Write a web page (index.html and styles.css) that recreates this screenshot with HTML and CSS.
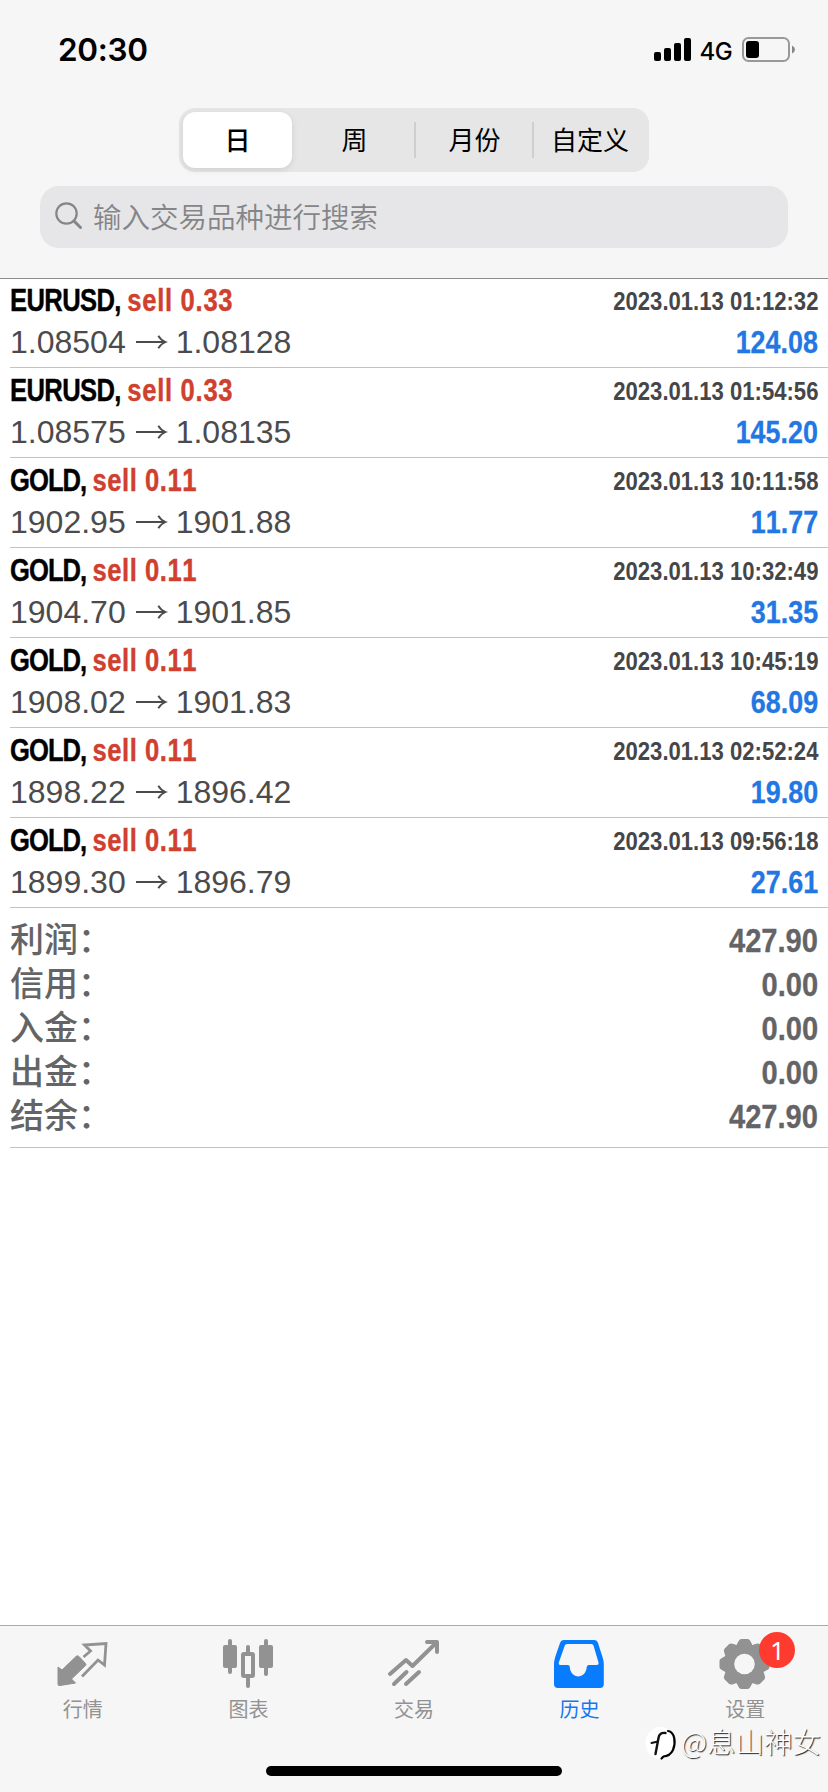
FILE: index.html
```html
<!DOCTYPE html>
<html lang="zh-CN">
<head>
<meta charset="utf-8">
<title>历史</title>
<link rel="stylesheet" href="styles.css">
</head>
<body>
<div class="screen">
  <header class="header">
    <div class="status">
      <span class="time">20:30</span>
      <div class="status-right">
        <svg class="signal" width="38" height="24" viewBox="0 0 38 24"><rect x="0" y="14" width="7" height="9" rx="2"/><rect x="10" y="10" width="7" height="13" rx="2"/><rect x="20" y="5" width="7" height="18" rx="2"/><rect x="30" y="0" width="7" height="23" rx="2"/></svg>
        <span class="network">4G</span>
        <svg class="battery" width="54" height="26" viewBox="0 0 54 26"><rect x="1" y="1" width="46" height="23" rx="5.5" fill="none" stroke="#999" stroke-width="2"/><rect x="4" y="4" width="13" height="17" rx="3"/><path d="M50 8.500Q53 10 53 12.500T50 16.500Z" fill="#888"/></svg>
      </div>
    </div>
    <nav class="segments">
      <span class="segment selected">日</span><span class="segment">周</span><span class="segment ruled">月份</span><span class="segment ruled">自定义</span>
    </nav>
    <div class="search">
      <svg width="28" height="28" viewBox="0 0 28 28" fill="none" stroke="#858587" stroke-linecap="round"><circle cx="11.500" cy="11.500" r="10.200" stroke-width="2.200"/><path d="M19 19L25.500 25.500" stroke-width="3"/></svg>
      <span>输入交易品种进行搜索</span>
    </div>
  </header>

  <main class="content">
    <ul class="deals">
      <li class="deal"><div class="line"><span class="title"><b class="symbol wide">EURUSD, </b><b class="side">sell 0.33</b></span><span class="date">2023.01.13 01:12:32</span></div><div class="line second"><span class="prices">1.08504<svg class="arrow" viewBox="0 0 32 16"><path d="M0 8H30M23 1.500Q25.500 6 30.500 8Q25.500 10 23 14.500"/></svg>1.08128</span><span class="profit">124.08</span></div></li>
      <li class="deal"><div class="line"><span class="title"><b class="symbol wide">EURUSD, </b><b class="side">sell 0.33</b></span><span class="date">2023.01.13 01:54:56</span></div><div class="line second"><span class="prices">1.08575<svg class="arrow" viewBox="0 0 32 16"><path d="M0 8H30M23 1.500Q25.500 6 30.500 8Q25.500 10 23 14.500"/></svg>1.08135</span><span class="profit">145.20</span></div></li>
      <li class="deal"><div class="line"><span class="title"><b class="symbol">GOLD, </b><b class="side">sell 0.11</b></span><span class="date">2023.01.13 10:11:58</span></div><div class="line second"><span class="prices">1902.95<svg class="arrow" viewBox="0 0 32 16"><path d="M0 8H30M23 1.500Q25.500 6 30.500 8Q25.500 10 23 14.500"/></svg>1901.88</span><span class="profit">11.77</span></div></li>
      <li class="deal"><div class="line"><span class="title"><b class="symbol">GOLD, </b><b class="side">sell 0.11</b></span><span class="date">2023.01.13 10:32:49</span></div><div class="line second"><span class="prices">1904.70<svg class="arrow" viewBox="0 0 32 16"><path d="M0 8H30M23 1.500Q25.500 6 30.500 8Q25.500 10 23 14.500"/></svg>1901.85</span><span class="profit">31.35</span></div></li>
      <li class="deal"><div class="line"><span class="title"><b class="symbol">GOLD, </b><b class="side">sell 0.11</b></span><span class="date">2023.01.13 10:45:19</span></div><div class="line second"><span class="prices">1908.02<svg class="arrow" viewBox="0 0 32 16"><path d="M0 8H30M23 1.500Q25.500 6 30.500 8Q25.500 10 23 14.500"/></svg>1901.83</span><span class="profit">68.09</span></div></li>
      <li class="deal"><div class="line"><span class="title"><b class="symbol">GOLD, </b><b class="side">sell 0.11</b></span><span class="date">2023.01.13 02:52:24</span></div><div class="line second"><span class="prices">1898.22<svg class="arrow" viewBox="0 0 32 16"><path d="M0 8H30M23 1.500Q25.500 6 30.500 8Q25.500 10 23 14.500"/></svg>1896.42</span><span class="profit">19.80</span></div></li>
      <li class="deal"><div class="line"><span class="title"><b class="symbol">GOLD, </b><b class="side">sell 0.11</b></span><span class="date">2023.01.13 09:56:18</span></div><div class="line second"><span class="prices">1899.30<svg class="arrow" viewBox="0 0 32 16"><path d="M0 8H30M23 1.500Q25.500 6 30.500 8Q25.500 10 23 14.500"/></svg>1896.79</span><span class="profit">27.61</span></div></li>
    </ul>
    <dl class="totals">
      <div class="total"><dt>利润：</dt><dd>427.90</dd></div>
      <div class="total"><dt>信用：</dt><dd>0.00</dd></div>
      <div class="total"><dt>入金：</dt><dd>0.00</dd></div>
      <div class="total"><dt>出金：</dt><dd>0.00</dd></div>
      <div class="total"><dt>结余：</dt><dd>427.90</dd></div>
    </dl>
  </main>

  <footer class="footer">
    <nav class="tabs">
      <div class="tab"><svg width="52" height="52" viewBox="0 0 52 52"><path d="M1 25L5 28L19 14.500Q20.500 13 22 14.500L28.500 21.500Q29.500 22.500 28.500 23.500L14.500 37L18.500 41L3 43.500Q1 44 1 42Z" fill="#929292" stroke="#929292" stroke-linejoin="round"/><path d="M25 34.500L41 18L47.500 23L49 1.500L27.500 3L33.500 9L26.500 15" fill="none" stroke="#929292" stroke-width="2.800"/></svg><span>行情</span></div>
      <div class="tab"><svg width="52" height="52" viewBox="0 0 52 52" fill="#929292"><rect x="1" y="3" width="14" height="23" rx="2"/><rect x="6" y="-3" width="4" height="35" rx="2"/><rect x="37" y="3" width="14" height="23" rx="2"/><rect x="42" y="-3" width="4" height="37" rx="2"/><rect x="24" y="3" width="4" height="43" rx="2"/><rect x="21" y="12" width="10" height="22" rx="1" fill="#f6f6f6" stroke="#929292" stroke-width="4"/></svg><span>图表</span></div>
      <div class="tab"><svg width="52" height="52" viewBox="0 0 52 52" fill="none" stroke="#929292" stroke-width="4" stroke-linecap="round" stroke-linejoin="round"><path d="M2 32L18 18L24.500 24L48 1M39 0H49V10M6 42L18.500 30M18 42L31 30"/></svg><span>交易</span></div>
      <div class="tab active"><svg width="52" height="52" viewBox="0 0 52 52"><path fill-rule="evenodd" d="M10-2H40Q43-2 44 1L48.500 15Q49.800 19 49.800 22V42Q49.800 46 46 46H4Q0 46 0 42V22Q0 19 1.200 15L6 1Q7-2 10-2ZM13 2Q11.300 2 10.800 3.500L4.800 20.500Q4.300 23 6.500 23H14Q15.700 23 15.800 25C16.500 37.500 32 37.500 32.700 25Q33 23 35 23H42.500Q45 23 44.500 20.500L39.500 3.500Q39 2 37.300 2Z"/></svg><span>历史</span></div>
      <div class="tab"><svg width="52" height="52" viewBox="0 0 52 52"><g transform="translate(25.500 22)" fill="#929292"><circle r="20"/><path id="tooth" d="M-10-17C-6.500-19-6.500-25-3-25H3C6.500-25 6.500-19 10-17Z"/><use href="#tooth" transform="rotate(45)"/><use href="#tooth" transform="rotate(90)"/><use href="#tooth" transform="rotate(135)"/><use href="#tooth" transform="rotate(180)"/><use href="#tooth" transform="rotate(225)"/><use href="#tooth" transform="rotate(270)"/><use href="#tooth" transform="rotate(315)"/><circle r="10.300" fill="#f6f6f6"/></g></svg><b class="badge">1</b><span>设置</span></div>
    </nav>
    <div class="home-indicator"></div>
    <div class="watermark"><svg width="36" height="40" viewBox="0 0 36 40" fill="none" stroke-linecap="round"><ellipse cx="15" cy="22" rx="14.500" ry="16" fill="#fff"/><path d="M20.500 12Q14.500 11 13.500 17L10.500 33" stroke="#111" stroke-width="2.400"/><path d="M6.500 22L13 20.500" stroke="#111" stroke-width="2"/><path d="M23 10C30 11 31 22 28 29Q25 35 18.500 35.500L16.500 37.500" stroke="#000" stroke-width="2.200"/></svg><span>@息山神女</span></div>
  </footer>
</div>
</body>
</html>
```

FILE: styles.css
```css
* { box-sizing: border-box; margin: 0; padding: 0; }
body {
  background: #fff;
  color: #000;
  font-family: "Liberation Sans", "Noto Sans CJK SC", sans-serif;
  font-kerning: none;
}
svg { display: block; overflow: visible; flex: none; }
.screen { width: 828px; height: 1792px; display: flex; flex-direction: column; overflow: hidden; }

.header { height: 279px; background: #f6f6f6; border-bottom: 1px solid #8c8c8c; display: flex; flex-direction: column; }
.status { height: 108px; padding: 30px 32px 0 58px; display: flex; justify-content: space-between; align-items: flex-start; }
.time { font: 600 31.500px/40px Inter, sans-serif; letter-spacing: -.3px; }
.status-right { display: flex; align-items: center; padding-top: 7px; height: 33px; }
.network { font: 500 24px/26px Inter, sans-serif; letter-spacing: -.6px; margin: 3px 10px 0 8px; }

.segments { width: 470px; height: 64px; margin-left: 179px; padding: 4px; border-radius: 16px; background: #e6e6e7; display: grid; grid-template-columns: 109px 122px 118px 1fr; }
.segment { display: flex; align-items: center; justify-content: center; padding: 0 0 2px 3px; font: 400 26px/36px "Noto Sans CJK SC", sans-serif; }
.segment.selected { background: #fff; padding-left: 0; border-radius: 12px; font-weight: 500; box-shadow: 0 2px 6px rgba(0, 0, 0, .1); }
.segment.ruled { background: linear-gradient(#cfcfd1, #cfcfd1) 0 50% / 2px 36px no-repeat; }
.search { margin: 14px 40px 0; height: 62px; border-radius: 19px; background: #e6e6e8; padding: 0 0 2px 15px; display: flex; align-items: center; gap: 10px; color: #858587; font: 350 28.500px/40px "Noto Sans CJK SC", sans-serif; }

.content { flex: 1; padding-left: 10px; }
.deals { list-style: none; }
.deal { height: 90px; padding: 4px 10px 0 0; border-bottom: 1px solid #c3c3c5; }
.deal:first-child { height: 89px; padding-top: 3px; }
.line { height: 37px; display: flex; justify-content: space-between; align-items: baseline; line-height: 37px; }
.line.second { height: 42px; line-height: 46px; }
.title { font-size: 32px; white-space: pre; transform: scaleX(.8); transform-origin: left; -webkit-text-stroke: .4px; }
.symbol { letter-spacing: -1.200px; }
.symbol.wide { letter-spacing: -.8px; }
.side { color: #d0402f; letter-spacing: .7px; }
.wide + .side { letter-spacing: .9px; }
.date { position: relative; top: -1px; font-size: 26px; font-weight: 700; color: #464648; transform: scaleX(.85); transform-origin: right; }
.prices { font-size: 32px; color: #4b4b4d; display: flex; align-items: center; }
.arrow { width: 31px; height: 16px; margin: 0 9px 0 10px; fill: none; stroke: #4b4b4d; stroke-width: 1.900; }
.profit { font-size: 32px; font-weight: 700; color: #2277e3; transform: scaleX(.84); transform-origin: right; -webkit-text-stroke: .3px; }

.totals { height: 240px; padding: 8px 10px 0 0; border-bottom: 1px solid #c3c3c5; color: #646466; }
.total { height: 44px; display: flex; justify-content: space-between; align-items: baseline; line-height: 44px; }
.total dt { font: 500 34px/44px "Noto Sans CJK SC", sans-serif; }
.total dd { font-size: 34px; font-weight: 700; transform: scaleX(.856); transform-origin: right; -webkit-text-stroke: .3px; }

.footer { position: relative; height: 167px; background: #f6f6f6; border-top: 1px solid #aaa; }
.tabs { display: grid; grid-template-columns: repeat(5, 1fr); height: 140px; }
.tab { position: relative; display: flex; flex-direction: column; align-items: center; padding-top: 16px; font: 400 20px/30px "Noto Sans CJK SC", sans-serif; color: #929292; }
.tab.active { color: #1677ed; }
.tab.active path { fill: #087cff; }
.badge { position: absolute; left: 97px; top: 6px; width: 36px; height: 36px; border-radius: 50%; background: #ff3b30; color: #fff; text-align: center; font: 400 26px/36px "Noto Sans", sans-serif; }
.home-indicator { width: 296px; height: 10px; margin: 0 auto; border-radius: 5px; background: #000; }
.watermark { position: absolute; right: 7px; top: 95px; display: flex; align-items: center; color: #fff; font: 300 28.500px/36px "Noto Sans CJK SC", sans-serif; text-shadow: 1px 1px 1px #222; }
```
